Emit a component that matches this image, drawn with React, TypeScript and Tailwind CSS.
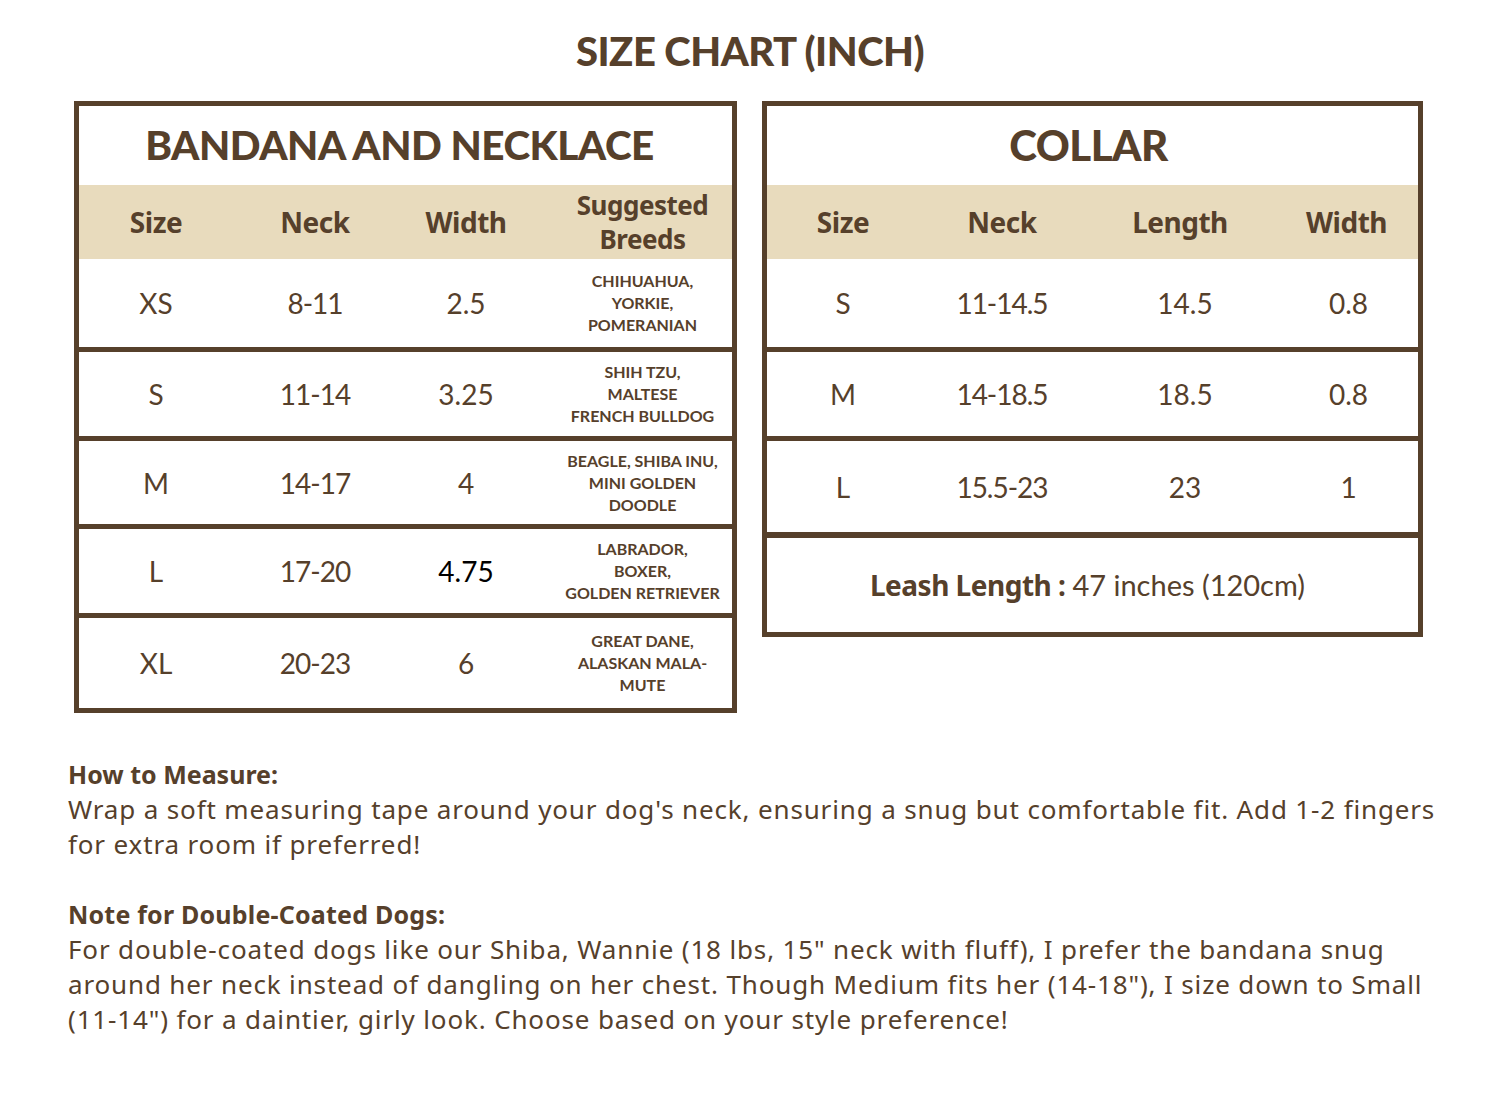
const brown = 'text-[#56402b]'

type BandanaRow = {
  size: string
  neck: string
  width: string
  breeds: string[]
  h: string
  black?: boolean
}

// row heights include the 5px divider on top
const bandanaRows: BandanaRow[] = [
  { size: 'XS', neck: '8-11', width: '2.5', breeds: ['CHIHUAHUA,', 'YORKIE,', 'POMERANIAN'], h: 'h-[88px]' },
  { size: 'S', neck: '11-14', width: '3.25', breeds: ['SHIH TZU,', 'MALTESE', 'FRENCH BULLDOG'], h: 'h-[89px]' },
  { size: 'M', neck: '14-17', width: '4', breeds: ['BEAGLE, SHIBA INU,', 'MINI GOLDEN', 'DOODLE'], h: 'h-[88px]' },
  { size: 'L', neck: '17-20', width: '4.75', breeds: ['LABRADOR,', 'BOXER,', 'GOLDEN RETRIEVER'], h: 'h-[89px]', black: true },
  { size: 'XL', neck: '20-23', width: '6', breeds: ['GREAT DANE,', 'ALASKAN MALA-', 'MUTE'], h: 'h-[95px]' },
]

const collarRows = [
  { size: 'S', neck: '11-14.5', length: '14.5', width: '0.8', h: 'h-[88px]' },
  { size: 'M', neck: '14-18.5', length: '18.5', width: '0.8', h: 'h-[89px]' },
  { size: 'L', neck: '15.5-23', length: '23', width: '1', h: 'h-[96px]' },
]

const lato = { fontFamily: 'Lato, "Noto Sans", sans-serif' }
const noto = { fontFamily: '"Noto Sans", Lato, sans-serif' }

const BandanaTable = () => {
  return (
    <div className="w-[663px] border-[5px] border-[#56402b] bg-white">
      <div className="flex h-[79px] items-center justify-center pr-[12px]">
        <h2 className={`text-[40.5px] font-black tracking-[-0.5px] ${brown}`}>BANDANA AND NECKLACE</h2>
      </div>
      <div className={`flex h-[74px] items-center bg-[#e8dbbd] text-[28px] font-bold tracking-[-0.5px] ${brown}`} style={noto}>
        <div className="w-[154px] text-center">Size</div>
        <div className="w-[164px] text-center">Neck</div>
        <div className="w-[138px] text-center">Width</div>
        <div className="flex-1 pl-[18px] text-center text-[26px] leading-[34px]">
          Suggested
          <br />
          Breeds
        </div>
      </div>
      {bandanaRows.map((row, i) => (
        <div
          key={row.size}
          className={`flex items-center ${row.h} ${i > 0 ? 'border-t-[5px] border-[#56402b]' : ''} ${brown}`}
        >
          <div className="w-[154px] text-center text-[28px]">{row.size}</div>
          <div className="w-[164px] text-center text-[28px] tracking-[-1px]">{row.neck}</div>
          <div className={`w-[138px] text-center text-[28px] ${row.black ? 'text-black' : ''}`}>{row.width}</div>
          <div className="flex-1 pl-[18px] text-center text-[16px] font-bold leading-[22px]">
            {row.breeds.map((b) => (
              <div key={b}>{b}</div>
            ))}
          </div>
        </div>
      ))}
    </div>
  )
}

const CollarTable = () => {
  return (
    <div className="w-[661px] border-[5px] border-[#56402b] bg-white">
      <div className="flex h-[79px] items-center justify-center pr-[8px]">
        <h2 className={`text-[42px] font-black tracking-[-0.5px] ${brown}`}>COLLAR</h2>
      </div>
      <div className={`flex h-[74px] items-center bg-[#e8dbbd] text-[28px] font-bold tracking-[-0.5px] ${brown}`} style={noto}>
        <div className="w-[152px] text-center">Size</div>
        <div className="w-[166px] text-center">Neck</div>
        <div className="w-[190px] text-center">Length</div>
        <div className="flex-1 text-center">Width</div>
      </div>
      {collarRows.map((row, i) => (
        <div
          key={row.size}
          className={`flex items-center text-[28px] ${row.h} ${i > 0 ? 'border-t-[5px] border-[#56402b]' : ''} ${brown}`}
        >
          <div className="w-[152px] text-center">{row.size}</div>
          <div className="w-[166px] text-center tracking-[-1px]">{row.neck}</div>
          <div className="w-[190px] pl-[10px] text-center">{row.length}</div>
          <div className="flex-1 pl-[4px] text-center">{row.width}</div>
        </div>
      ))}
      <div className={`flex h-[100px] items-center justify-center border-t-[6px] border-[#56402b] pr-[10px] text-[28px] ${brown}`}>
        <span className="font-bold tracking-[-0.5px]" style={noto}>Leash Length :</span>
        <span className="ml-[7px] text-[29px]">47 inches (120cm)</span>
      </div>
    </div>
  )
}

const App = () => {
  return (
    <div className="h-[1094px] w-[1500px] bg-white" style={lato}>
      <h1 className={`pt-[26px] text-center text-[40px] font-black leading-[50px] tracking-[-0.5px] ${brown}`}>
        SIZE CHART (INCH)
      </h1>
      <div className="mt-[25px] flex items-start gap-[25px] pl-[74px]">
        <BandanaTable />
        <CollarTable />
      </div>
      <div className={`mt-[44px] w-[1463px] pl-[68px] text-[26px] leading-[35px] tracking-[0.85px] ${brown}`} style={noto}>
        <p className="text-[25px] font-bold tracking-[0px]">How to Measure:</p>
        <p>
          Wrap a soft measuring tape around your dog's neck, ensuring a snug but comfortable fit. Add 1-2 fingers
          for extra room if preferred!
        </p>
        <p className="mt-[35px] text-[25px] font-bold tracking-[0.2px]">Note for Double-Coated Dogs:</p>
        <p>
          For double-coated dogs like our Shiba, Wannie (18 lbs, 15" neck with fluff), I prefer the bandana snug
          around her neck instead of dangling on her chest. Though Medium fits her (14-18"), I size down to Small
          (11-14") for a daintier, girly look. Choose based on your style preference!
        </p>
      </div>
    </div>
  )
}

export default App
